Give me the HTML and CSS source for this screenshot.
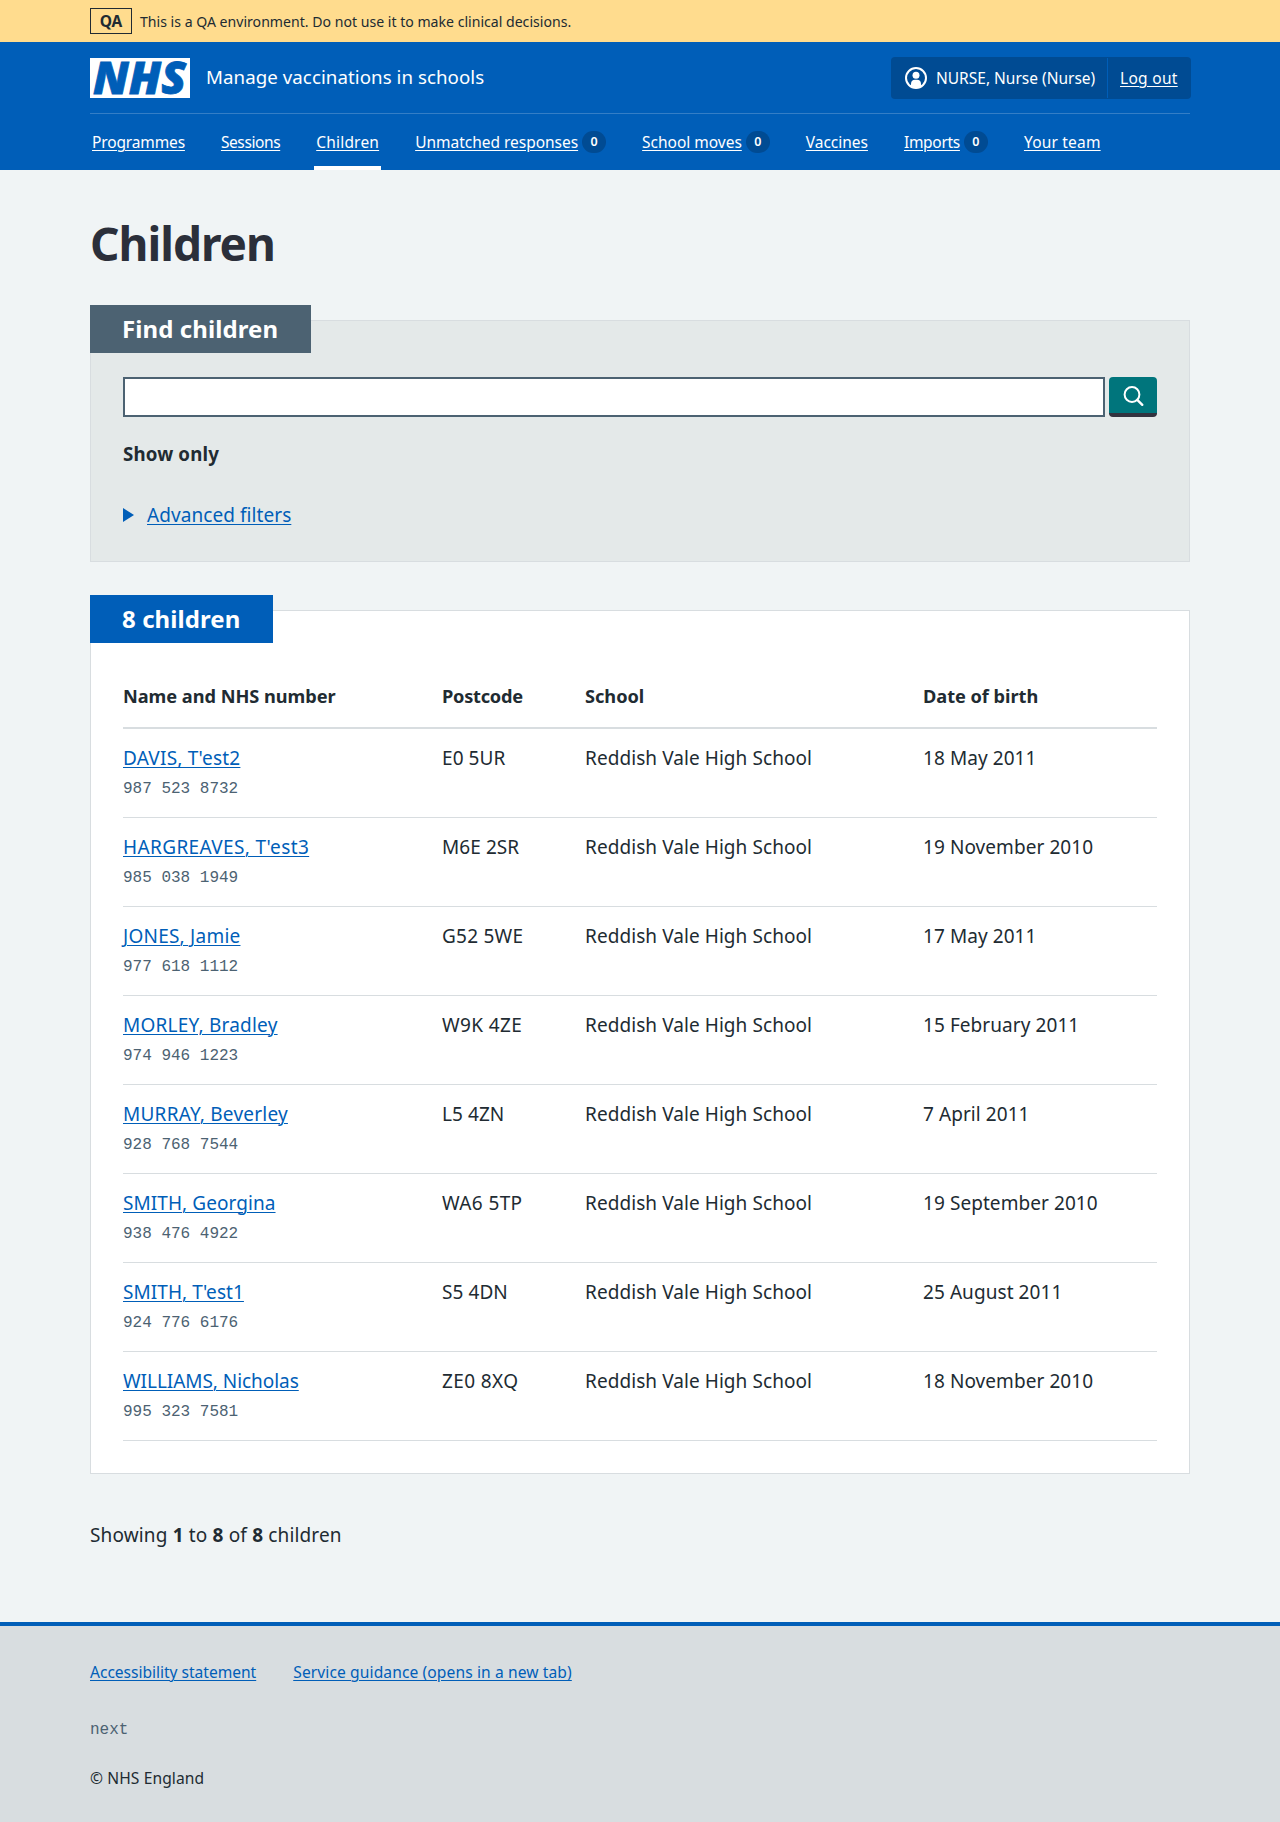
FILE: index.html
```html
<!DOCTYPE html>
<html lang="en">
<head>
<meta charset="utf-8">
<title>Children – Manage vaccinations in schools</title>
<link rel="stylesheet" href="styles.css">
</head>
<body>
<div class="environment">
  <div class="container environment-inner">
    <strong class="environment-tag">QA</strong>
    <span>This is a QA environment. Do not use it to make clinical decisions.</span>
  </div>
</div>
<header class="header">
  <div class="container">
    <div class="header-top">
      <a class="brand" href="#">
        <svg class="logo" viewBox="0 0 100 40" width="100" height="40" role="img" aria-label="NHS">
          <rect width="100" height="40" fill="#fff"/>
          <text class="logo-text" x="3" y="36.3" textLength="93" lengthAdjust="spacingAndGlyphs">NHS</text>
        </svg>
        <span class="service-name">Manage vaccinations in schools</span>
      </a>
      <div class="account">
        <div class="account-user">
          <svg width="22" height="22" viewBox="0 0 22 22" aria-hidden="true">
            <circle cx="11" cy="11" r="10" fill="none" stroke="#fff" stroke-width="2"/>
            <circle cx="11" cy="8.2" r="3.5" fill="#fff"/>
            <path d="M6 19v-2.200c0-2.400 1.600-4 4-4h2c2.400 0 4 1.600 4 4V19c-3 2.600-7 2.600-10 0z" fill="#fff"/>
          </svg>
          <span class="account-name">NURSE, Nurse (Nurse)</span>
        </div>
        <div class="account-logout"><a href="#">Log out</a></div>
      </div>
    </div>
    <nav class="nav">
      <div class="nav-item nav-programmes"><a href="#">Programmes</a></div>
      <div class="nav-item nav-sessions"><a href="#">Sessions</a></div>
      <div class="nav-item nav-children current"><a href="#">Children</a></div>
      <div class="nav-item"><a href="#">Unmatched responses</a><span class="count">0</span></div>
      <div class="nav-item"><a href="#">School moves</a><span class="count">0</span></div>
      <div class="nav-item"><a href="#">Vaccines</a></div>
      <div class="nav-item nav-imports"><a href="#">Imports</a><span class="count">0</span></div>
      <div class="nav-item nav-team"><a href="#">Your team</a></div>
    </nav>
  </div>
</header>
<main class="container main">
  <h1>Children</h1>
  <section class="card card-find">
    <h2 class="card-heading">Find children</h2>
    <div class="search">
      <input class="search-input" type="text" aria-label="Search">
      <button class="search-button" type="button" aria-label="Search">
        <svg width="22" height="22" viewBox="0 0 22 22" aria-hidden="true" fill="none" stroke="#fff" stroke-width="2">
          <circle cx="9" cy="9.500" r="7.400"/>
          <path d="M14.300 14.800l5 5" stroke-width="2.400" stroke-linecap="round"/>
        </svg>
      </button>
    </div>
    <p class="show-only">Show only</p>
    <div class="details">
      <svg width="11" height="14" viewBox="0 0 11 14" aria-hidden="true"><path d="M0 0l11 7-11 7z" fill="#005eb8"/></svg>
      <a href="#">Advanced filters</a>
    </div>
  </section>
  <section class="card card-results">
    <h2 class="card-heading">8 children</h2>
    <table class="table">
      <thead>
        <tr><th class="col-name">Name and NHS number</th><th class="col-postcode">Postcode</th><th class="col-school">School</th><th class="col-dob">Date of birth</th></tr>
      </thead>
      <tbody>
        <tr><td><a class="wide" href="#">DAVIS, T'est2</a><span class="number">987 523 8732</span></td><td>E0 5UR</td><td>Reddish Vale High School</td><td>18 May 2011</td></tr>
        <tr><td><a class="wider" href="#">HARGREAVES, T'est3</a><span class="number">985 038 1949</span></td><td>M6E 2SR</td><td>Reddish Vale High School</td><td>19 November 2010</td></tr>
        <tr><td><a class="wide" href="#">JONES, Jamie</a><span class="number">977 618 1112</span></td><td class="wide">G52 5WE</td><td>Reddish Vale High School</td><td>17 May 2011</td></tr>
        <tr><td><a class="wide" href="#">MORLEY, Bradley</a><span class="number">974 946 1223</span></td><td class="wider">W9K 4ZE</td><td>Reddish Vale High School</td><td>15 February 2011</td></tr>
        <tr><td><a class="wide" href="#">MURRAY, Beverley</a><span class="number">928 768 7544</span></td><td>L5 4ZN</td><td>Reddish Vale High School</td><td>7 April 2011</td></tr>
        <tr><td><a href="#">SMITH, Georgina</a><span class="number">938 476 4922</span></td><td class="wider">WA6 5TP</td><td>Reddish Vale High School</td><td>19 September 2010</td></tr>
        <tr><td><a href="#">SMITH, T'est1</a><span class="number">924 776 6176</span></td><td>S5 4DN</td><td>Reddish Vale High School</td><td>25 August 2011</td></tr>
        <tr><td><a class="tight" href="#">WILLIAMS, Nicholas</a><span class="number">995 323 7581</span></td><td class="wider">ZE0 8XQ</td><td>Reddish Vale High School</td><td>18 November 2010</td></tr>
      </tbody>
    </table>
  </section>
  <p class="showing">Showing <b>1</b> to <b>8</b> of <b>8</b> children</p>
</main>
<footer class="footer">
  <div class="container">
    <div class="footer-links">
      <a class="footer-accessibility" href="#">Accessibility statement</a>
      <a class="footer-guidance" href="#">Service guidance (opens in a new tab)</a>
    </div>
    <p class="version">next</p>
    <p class="copyright">© NHS England</p>
  </div>
</footer>
</body>
</html>
```
FILE: styles.css
```css
* { box-sizing: border-box; }
body {
  margin: 0;
  min-height: 1822px;
  display: flex;
  flex-direction: column;
  background: #f0f4f5;
  color: #212b32;
  font: 400 19px/28px "Noto Sans", "Open Sans", sans-serif;
}
h1, h2, p { margin: 0; }
a { color: #005eb8; text-underline-offset: 2px; text-decoration-thickness: 1px; }
.container { width: 1100px; margin: 0 auto; }

.environment { height: 42px; background: #ffdc8e; }
.environment-inner { display: flex; align-items: center; gap: 8px; height: 42px; font-size: 14.1px; line-height: 20px; }
.environment-inner span { margin-top: 1px; }
.environment-tag { width: 42px; height: 26px; border: 1px solid #212b32; font-size: 15.5px; font-weight: 700; line-height: 24px; text-align: center; }

.header { height: 128px; background: #005eb8; color: #fff; }
.header a { color: #fff; }
.header-top { display: flex; align-items: center; justify-content: space-between; height: 72px; padding-top: 1px; border-bottom: 1px solid #347ec6; }
.brand { display: flex; align-items: center; gap: 16px; text-decoration: none; }
.logo { display: block; overflow: visible; }
.logo-text { fill: #005eb8; stroke: #005eb8; stroke-width: .8px; font: italic 800 45px/1 "Open Sans", sans-serif; }
.service-name { margin-top: -2px; font-size: 18.7px; letter-spacing: .06px; }
.account { display: flex; width: 300px; height: 42px; margin-right: -1px; border-radius: 4px; background: #004b93; font-size: 15.5px; }
.account-user { display: flex; align-items: center; gap: 9px; width: 216px; padding-left: 14px; }
.account-name { letter-spacing: 0; }
.account-logout { flex: 1; margin: 1px 0; border-left: 1px solid #005eb8; padding-left: 12px; line-height: 40px; letter-spacing: .3px; }

.nav { display: flex; gap: 32px; height: 57px; font-size: 15.5px; }
.nav-item { display: flex; align-items: center; height: 56px; padding: 4px 2px 0; border-bottom: 4px solid transparent; letter-spacing: -.02px; }
.nav-item a { line-height: 24px; }
.nav-item.current { border-bottom-color: #fff; }
.nav-programmes { letter-spacing: -.14px; }
.nav-sessions { letter-spacing: -.4px; }
.nav-children { letter-spacing: .2px; }
.nav-imports { letter-spacing: -.3px; }
.nav-team { letter-spacing: .2px; }
.count { width: 24px; height: 22px; margin-left: 4px; border-radius: 11px; background: #004b93; font-size: 12.5px; font-weight: 600; line-height: 22px; letter-spacing: 0; text-align: center; }

.main { flex: 1; }
h1 { margin-top: 45px; height: 105px; font-size: 46px; font-weight: 700; line-height: 56px; letter-spacing: -1px; color: #2b2f3a; }
.card { border: 1px solid #d8dde0; padding: 0 32px; }
.card-heading { width: fit-content; height: 48px; margin: -16px 0 0 -33px; padding: 0 32px; color: #fff; font-size: 24px; font-weight: 700; line-height: 48px; letter-spacing: .08px; }
.card-find { height: 242px; background: #e4e9e9; }
.card-find .card-heading { width: 221px; background: #4c6272; }
.card-results { height: 864px; margin-top: 48px; background: #fff; }
.card-results .card-heading { width: 183px; background: #005eb8; }
.search { display: flex; gap: 4px; margin-top: 24px; }
.search-input { flex: 1; height: 40px; border: 2px solid #4c6272; background: #fff; }
.search-button { display: flex; align-items: center; justify-content: center; width: 48px; height: 40px; border: 0; border-bottom: 4px solid #33333f; border-radius: 4px; padding: 1px 0 0 2px; background: #00757c; }
.show-only { margin-top: 23px; font-size: 18.7px; font-weight: 700; letter-spacing: .15px; }
.details { display: flex; align-items: center; gap: 13px; margin-top: 33px; letter-spacing: .07px; }

.table { width: 1034px; margin-top: 23px; border-collapse: collapse; table-layout: fixed; }
th, td { padding: 0; text-align: left; vertical-align: top; }
th { height: 62px; padding-top: 17px; border-bottom: 2px solid #d8dde0; font-size: 18.2px; font-weight: 700; line-height: 26px; letter-spacing: -.03px; }
.col-name { width: 319px; }
.col-postcode { width: 143px; letter-spacing: -.25px; }
.col-school { width: 338px; }
td { height: 89px; padding-top: 16px; border-bottom: 1px solid #d8dde0; line-height: 26px; letter-spacing: .07px; }
.wide { letter-spacing: .23px; }
.wider { letter-spacing: .38px; }
.tight { letter-spacing: -.05px; }
.number { display: block; margin-top: 4px; color: #4c6272; font: 16px/29px "Liberation Mono", monospace; letter-spacing: 0; }
.showing { margin-top: 47px; letter-spacing: .15px; }
.showing b { font-weight: 700; }

.footer { height: 200px; border-top: 4px solid #005eb8; background: #d8dde0; font-size: 15.6px; line-height: 24px; }
.footer-links { display: flex; gap: 37px; padding-top: 34px; }
.footer-accessibility { letter-spacing: -.03px; }
.footer-guidance { letter-spacing: .1px; }
.version { margin-top: 34px; color: #4c6272; font: 16px/24px "Liberation Mono", monospace; }
.copyright { margin-top: 24px; letter-spacing: .1px; }
```
